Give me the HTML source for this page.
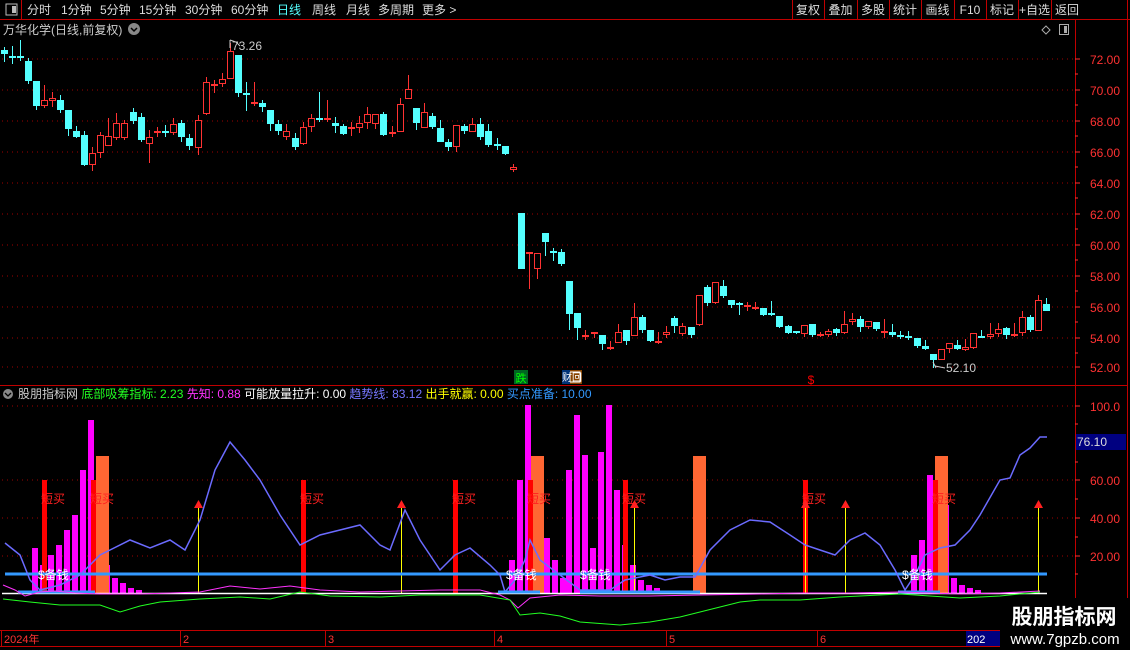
<!DOCTYPE html>
<html><head><meta charset="utf-8">
<style>
html,body{margin:0;padding:0;background:#000;width:1130px;height:650px;overflow:hidden;font-family:"Liberation Sans","Noto Sans CJK SC",sans-serif}
</style></head><body>
<div style="position:relative;width:1130px;height:650px">
<svg id="s" width="1130" height="650" style="position:absolute;left:0;top:0" xmlns="http://www.w3.org/2000/svg"></svg>
</div>
<script>
const S=document.getElementById('s');let h='';
const R='#ff3232',C='#54ffff';
function L(x1,y1,x2,y2,c,w,extra){h+=`<line x1="${x1}" y1="${y1}" x2="${x2}" y2="${y2}" stroke="${c}" stroke-width="${w||1}" ${extra||''}/>`}
function RC(x,y,w,hh,f,st){h+=`<rect x="${x}" y="${y}" width="${w}" height="${hh}" fill="${f}" ${st?`stroke="${st}"`:''}/>`}
function T(x,y,s,c,fs,anc,fw){h+=`<text x="${x}" y="${y}" fill="${c}" font-size="${fs||12}" font-family="Liberation Sans,Noto Sans CJK SC,sans-serif" ${anc?`text-anchor="${anc}"`:''} ${fw?`font-weight="${fw}"`:''}>${s}</text>`}
function P(pts,c,w){h+=`<polyline fill="none" stroke="${c}" stroke-width="${w||1}" points="${pts.map(p=>p.join(',')).join(' ')}"/>`}
L(0,19.5,1130,19.5,'#c00000',1);L(21.5,0,21.5,19,'#c00000',1);
RC(6,4,11,11,'none','#bbb');RC(12,6,4,7,'#bbb');
const tabs=[['分时',27],['1分钟',61],['5分钟',100],['15分钟',139],['30分钟',185],['60分钟',231],['日线',277],['周线',312],['月线',346],['多周期',378],['更多 >',422]];
tabs.forEach(t=>T(t[1],14,t[0],t[0]=='日线'?'#54ffff':'#ddd',12));
const bt=['复权','叠加','多股','统计','画线','F10','标记','+自选','返回'];
const bx=[792,824,857,889,921,954,986,1018,1051,1083];
bt.forEach((b,i)=>{L(bx[i]+0.5,0,bx[i]+0.5,19,'#c00000');T((bx[i]+bx[i+1])/2,14,b,'#ddd',12,'middle')});
L(1127.5,0,1127.5,650,'#c00000');
T(3,34,'万华化学(日线,前复权)','#ccc',12);
h+=`<circle cx="134" cy="29" r="6" fill="#888"/><path d="M131 28l3 3 3-3" stroke="#000" fill="none" stroke-width="1.5"/>`;
h+=`<path d="M1046 26l4 4-4 4-4-4z" fill="none" stroke="#aaa"/>`;RC(1059.5,24.5,9,10,'none','#aaa');RC(1064,26,3,7,'#aaa');
L(1075.5,20,1075.5,630,'#c00000');
const py=[[72,59],[70,90],[68,121],[66,152],[64,183],[62,214],[60,245],[58,276],[56,307],[54,338],[52,367]];
py.forEach(p=>{L(2,p[1],1075,p[1],'#a00000',1,'stroke-dasharray="1 4"');L(1075,p[1],1080,p[1],R);T(1120,p[1]+5,p[0].toFixed(2),R,12,'end')});
for(let i=0;i<10;i++){let y=74+i*31;L(1075,y,1078,y,R)}
const c=[[4,50,54,C,47,62],[12,56,58,C,46,64],[20,56,58,C,40,61],[28,61,81,C],[36,81,106,C,81,110],[44,100,106,R,85,108],[52,98,101,R,92,107],[60,100,110,C,95,113],[68,110,129,C,110,136],[76,131,137,C,126,138],[84,135,165,C,131,166],[92,153,165,R,147,171],[100,135,153,R,132,158],[108,136,146,R,118,146],[116,123,138,R,113,140],[124,123,138,R,120,140],[133,112,121,C,108,124],[141,117,140,C,113,142],[149,137,144,R,130,163],[157,131,133,R,127,137],[165,131,133,C,125,137],[173,124,133,R,118,135],[181,123,137,C,120,142],[189,138,146,C,134,150],[198,120,148,R,115,155],[206,82,114,R,77,115],[214,84,86,R,80,93],[222,79,84,R,73,87],[230,51,79,R,43,79],[238,55,93,C,55,97],[246,93,95,C,82,111],[254,102,104,R,82,106],[262,103,107,C,100,112],[270,110,124,C,110,131],[278,124,131,C,120,135],[286,131,137,R,124,140],[295,138,147,C,133,150],[303,127,144,R,122,145],[311,118,127,R,114,132],[319,118,120,C,92,122],[327,118,120,R,100,122],[335,123,126,C,117,133],[343,126,134,C,124,135],[351,127,129,R,122,136],[359,123,128,R,116,133],[367,114,123,R,107,129],[375,114,124,R,114,129],[383,114,135,C,112,136],[392,132,134,R,126,137],[400,104,132,R,98,132],[408,89,99,R,75,99],[416,108,123,C,108,130],[424,112,128,R,103,128],[432,116,127,C,113,129],[440,128,142,C,120,142],[448,142,147,C,139,151],[456,125,147,R,125,152],[464,126,131,C,124,134],[472,124,132,R,118,132],[480,124,137,C,118,140],[488,131,145,C,124,147],[497,144,146,C,138,150],[505,146,154,C,146,155],[513,167,170,R,164,172],[521,213,269,C,213,269],[529,252,254,R,252,289],[537,253,269,R,253,279],[545,233,242,C,233,256],[553,251,253,C,248,261],[561,252,264,C,249,266],[569,281,314,C,281,330],[577,313,328,C,313,340],[585,335,337,R,330,340],[594,332,334,R,332,338],[602,335,344,C,335,350],[610,347,349,R,341,350],[618,332,343,R,324,343],[626,330,341,C,330,345],[634,317,336,R,303,336],[642,317,330,C,315,333],[650,330,341,C,330,342],[658,341,343,R,332,344],[666,332,335,R,326,338],[674,318,326,C,316,333],[682,326,334,R,323,336],[691,327,335,C,327,338],[699,295,325,R,295,326],[707,287,303,C,285,306],[715,282,303,R,282,304],[723,286,296,C,280,298],[731,300,305,C,300,308],[739,303,305,C,302,315],[747,305,307,R,302,311],[755,307,309,R,302,310],[763,308,315,C,308,316],[771,313,315,C,301,316],[779,316,327,C,316,328],[788,326,333,C,325,334],[796,331,333,C,331,334],[804,325,334,R,325,337],[812,324,335,C,324,337],[820,334,336,R,332,337],[828,331,335,R,329,337],[836,329,333,C,328,336],[844,324,333,R,311,334],[852,319,322,R,313,325],[860,319,327,C,316,332],[868,321,327,R,321,329],[876,322,329,C,322,331],[884,331,333,R,319,338],[892,332,335,C,324,337],[900,335,337,C,331,339],[908,336,338,C,331,340],[917,338,346,C,338,348],[925,346,349,C,340,350],[933,354,360,C,354,368],[941,349,360,R,349,360],[949,343,349,R,343,353],[957,345,349,C,340,350],[965,347,350,R,339,351],[973,333,348,R,333,349],[981,336,338,C,330,338],[990,334,337,R,323,339],[998,329,334,R,323,337],[1006,328,335,C,327,339],[1014,334,336,R,323,337],[1022,317,333,R,311,336],[1030,317,330,C,315,332],[1038,300,331,R,295,331],[1046,304,311,C,298,311]];
c.forEach(k=>{let [x,t,b,col,wt,wb]=k;wt=wt||t-3;wb=wb||b+3;
L(x+0.5,wt,x+0.5,wb,col,1);
if(col==R){if(b-t<=2)RC(x-3,t,7,2,R);else h+=`<rect x="${x-2.5}" y="${t+0.5}" width="6" height="${b-t-1}" fill="#000" stroke="${R}"/>`}
else RC(x-3,t,7,Math.max(2,b-t),C)});
T(232,50,'73.26','#ccc',12);L(230,40,230,48,'#ccc');P([[230,40],[236,42],[240,46]],'#ccc');
T(946,372,'52.10','#ccc',12);P([[935,366],[945,368]],'#ccc');L(933,362,936,368,'#ccc');
RC(514,370,14,14,'#006622');T(521,382,'跌','#0f0',11,'middle');
RC(562,370,20,14,'#884400');RC(570,372,10,10,'none','#fff');RC(562,370,8,14,'#003377');T(572,381,'财回','#fff',10,'middle');
T(811,384,'$','#f00',12,'middle');
L(0,385.5,1127,385.5,'#c00000');
h+=`<circle cx="8" cy="394" r="5" fill="#888"/><path d="M5 393l3 3 3-3" stroke="#000" fill="none" stroke-width="1.3"/>`;
h+=`<text x="18" y="398" font-size="12" font-family="Liberation Sans,Noto Sans CJK SC,sans-serif"><tspan fill="#ccc">股朋指标网 </tspan><tspan fill="#22ff22">底部吸筹指标: 2.23 </tspan><tspan fill="#ff33ff">先知: 0.88 </tspan><tspan fill="#fff">可能放量拉升: 0.00 </tspan><tspan fill="#7777ff">趋势线: 83.12 </tspan><tspan fill="#ffff00">出手就赢: 0.00 </tspan><tspan fill="#3399ff">买点准备: 10.00</tspan></text>`;
const iy=[[100,406,'100.0'],[60,480,'60.00'],[40,518,'40.00'],[20,556,'20.00']];
iy.forEach(p=>{L(2,p[1],1075,p[1],'#a00000',1,'stroke-dasharray="1 4"');L(1075,p[1],1080,p[1],R);T(1120,p[1]+5,p[2],R,12,'end')});
[424,462,499,537,574].forEach(y=>L(1075,y,1078,y,R));
RC(1076,434,50,16,'#000080');T(1077,446,'76.10','#ddd',12);
const mag='#ff00ff',org='#ff6633';
const mb=[[35,548],[43,565],[51,555],[59,545],[67,530],[75,515],[83,470],[91,420],[107,565],[115,578],[123,583],[131,588],[139,590],[512,560],[520,480],[528,405],[547,538],[555,560],[563,578],[569,470],[577,415],[585,455],[593,548],[601,452],[609,405],[617,490],[625,545],[633,565],[641,580],[649,585],[657,588],[914,555],[922,540],[930,475],[946,505],[954,578],[962,585],[970,588],[978,590]];
mb.forEach(b=>RC(b[0]-3,b[1],6,593-b[1],mag));
[[102,456],[537,456],[699,456],[941,456]].forEach(b=>RC(b[0]-6,b[1],13,593-b[1],org));
[44,93,303,455,530,625,805,935].forEach(x=>RC(x-2,480,5,113,'#ff0000'));
[44,93,303,455,530,625,805,935].forEach(x=>T(x-3,503,'短买','#ff2020',12));
[198,401,634,805,845,1038].forEach(x=>{RC(x,505,1,88,'#ffff00');h+=`<path d="M${x-4} 508l4.5-8 4.5 8z" fill="#ff2020"/>`});
L(5,574,1047,574,'#3399ff',3);
P([[5,543],[20,555],[30,580],[40,590],[60,585],[80,575],[100,555],[110,550],[130,540],[150,548],[170,540],[185,550],[200,520],[215,470],[230,442],[245,460],[260,480],[280,515],[300,545],[320,535],[340,530],[360,525],[380,545],[390,550],[405,510],[420,540],[440,570],[455,555],[470,548],[490,565],[500,575],[505,592],[515,580],[525,560],[530,540],[540,560],[560,575],[580,590],[610,590],[625,580],[650,575],[665,580],[680,577],[695,577],[710,550],[730,530],[750,520],[770,522],[790,535],[805,545],[820,550],[835,555],[850,540],[865,533],[880,545],[895,570],[905,590],[915,575],[925,555],[940,548],[955,545],[970,530],[980,515],[1000,480],[1010,478],[1020,455],[1030,448],[1040,437],[1047,437]],'#6b6bff',1.5);
L(2,593.5,1047,593.5,'#fff',1.5);
[[18,95],[498,540],[580,700],[898,940]].forEach(s=>L(s[0],592,s[1],592,'#3399ff',3));
P([[3,585],[15,590],[25,596],[40,592],[55,591],[75,593],[100,594],[140,594],[200,592],[230,586],[260,589],[290,586],[320,590],[360,592],[400,591],[440,590],[480,590],[500,595],[510,600],[518,608],[530,598],[560,595],[600,596],[650,596],[700,595],[760,594],[800,593],[850,593],[900,592],[960,594],[1000,593],[1040,591]],'#ff33ff',1);
P([[3,599],[30,602],[60,605],[100,605],[120,612],[140,606],[160,602],[200,599],[240,597],[270,599],[300,592],[330,596],[380,597],[420,595],[480,595],[510,600],[520,615],[540,613],[560,616],[580,622],[620,625],[650,622],[680,617],[700,612],[720,607],[740,602],[760,600],[800,600],[840,597],[900,594],[960,598],[1000,596],[1040,592]],'#22ff22',1);
[[38,'$备钱'],[506,'$备钱'],[580,'$备钱'],[902,'$备钱']].forEach(t=>T(t[0],579,t[1],'#fff',12));
L(0,630.5,1075,630.5,'#c00000');L(0,646.5,1075,646.5,'#c00000');
[[3,'2024年'],[182,'2'],[327,'3'],[496,'4'],[668,'5'],[819,'6']].forEach(t=>{L(t[0]-1.5,631,t[0]-1.5,646,'#c00000');T(t[0]+1,643,t[1],R,11)});
RC(966,631,40,15,'#000080');T(967,643,'202','#fff',11);
RC(1000,598,130,52,'#000');
T(1064,624,'股朋指标网','#fff',21,'middle','bold');T(1065,644,'www.7gpzb.com','#fff',15,'middle');
S.innerHTML=h;
</script>
</body></html>
